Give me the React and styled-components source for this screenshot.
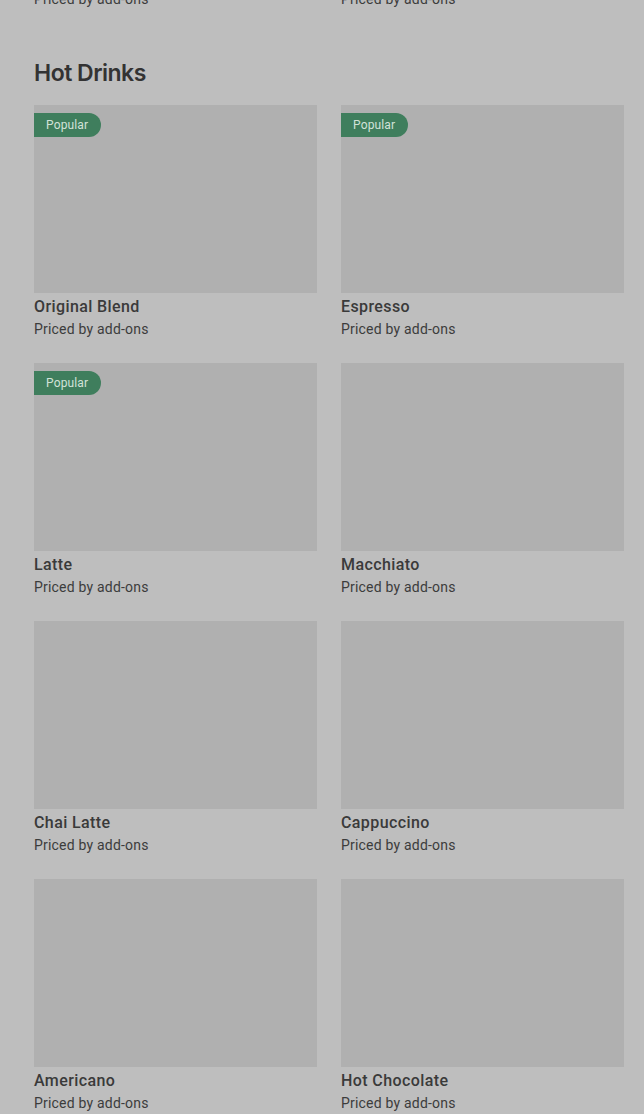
import React from "react";
import styled, { createGlobalStyle } from "styled-components";

const Global = createGlobalStyle`
  html, body { margin: 0; padding: 0; background: #bebebe; }
  body { font-family: Roboto, "Liberation Sans", sans-serif; overflow: hidden; }
`;

const Page = styled.div`
  padding: 0 20px 0 34px;
  background: #bebebe;
  min-height: 1114px;
  box-sizing: border-box;
`;

const Grid = styled.div`
  display: grid;
  grid-template-columns: 283px 283px;
  column-gap: 24px;
  row-gap: 24px;
`;

const PrevRow = styled(Grid)`
  margin-top: -11px;
`;

const Heading = styled.h2`
  margin: 48px 0 16px;
  font-family: Inter, "Liberation Sans", sans-serif;
  font-size: 23px;
  line-height: 32px;
  font-weight: 600;
  letter-spacing: -0.5px;
  color: #333;
`;

const Card = styled.div`
  display: flex;
  flex-direction: column;
`;

const Thumb = styled.div`
  position: relative;
  height: 188px;
  background: #b0b0b0;
`;

const Badge = styled.span`
  position: absolute;
  top: 8px;
  left: 0;
  height: 24px;
  padding: 0 13px 0 12px;
  display: flex;
  align-items: center;
  background: #3f7e5d;
  color: #d2e2d8;
  font-size: 12px;
  letter-spacing: 0.15px;
  border-radius: 0 12px 12px 0;
`;

const Title = styled.div`
  margin-top: 3px;
  font-size: 16px;
  line-height: 22px;
  font-weight: 500;
  letter-spacing: 0.4px;
  color: #3a3a3a;
`;

const Sub = styled.div`
  margin-top: ${(p) => (p.$flush ? "0" : "1px")};
  font-size: 14px;
  line-height: 20px;
  letter-spacing: 0.2px;
  color: #3c3c3c;
`;

const items = [
  { name: "Original Blend", popular: true },
  { name: "Espresso", popular: true },
  { name: "Latte", popular: true },
  { name: "Macchiato" },
  { name: "Chai Latte" },
  { name: "Cappuccino" },
  { name: "Americano" },
  { name: "Hot Chocolate" },
];

export default function App() {
  return (
    <>
      <Global />
      <Page>
        <PrevRow>
          <Sub $flush>Priced by add-ons</Sub>
          <Sub $flush>Priced by add-ons</Sub>
        </PrevRow>
        <Heading>Hot Drinks</Heading>
        <Grid>
          {items.map((it) => (
            <Card key={it.name}>
              <Thumb>{it.popular && <Badge>Popular</Badge>}</Thumb>
              <Title>{it.name}</Title>
              <Sub>Priced by add-ons</Sub>
            </Card>
          ))}
        </Grid>
      </Page>
    </>
  );
}
